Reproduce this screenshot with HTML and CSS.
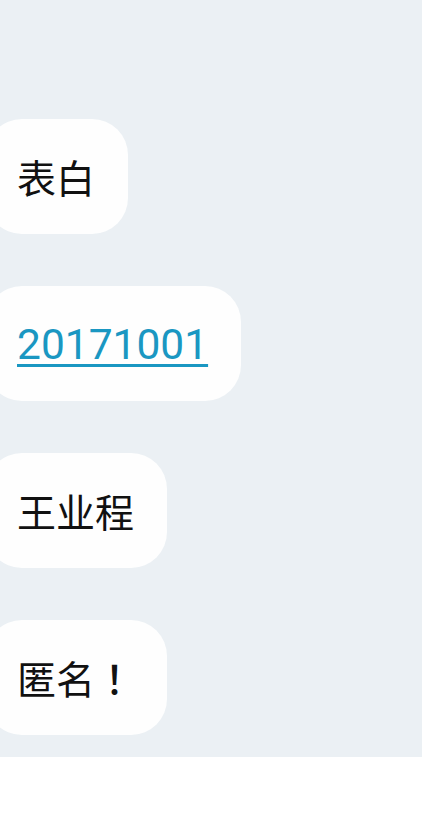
FILE: index.html
```html
<!DOCTYPE html>
<html lang="zh">
<head>
<meta charset="utf-8">
<link rel="stylesheet" href="styles.css">
</head>
<body>
<div class="chat">
  <div class="bubble">表白</div>
  <div class="bubble"><a class="link" href="#">20171001</a></div>
  <div class="bubble">王业程</div>
  <div class="bubble">匿名<span class="punct">！</span></div>
</div>
<div class="footer"></div>
</body>
</html>
```
FILE: styles.css
```css
html, body {
  margin: 0;
  padding: 0;
}
body {
  width: 422px;
  height: 840px;
  overflow: hidden;
  background: #ffffff;
  font-family: "Noto Sans CJK SC", sans-serif;
}
.chat {
  height: 757px;
  box-sizing: border-box;
  background: #ebf0f4;
  padding-top: 119px;
  display: flex;
  flex-direction: column;
  align-items: flex-start;
  gap: 52px;
}
.bubble {
  margin-left: -14px;
  height: 115px;
  box-sizing: border-box;
  padding: 0 33px 0 31px;
  background: #fefefe;
  border-radius: 36px;
  display: flex;
  align-items: center;
  font-size: 39px;
  color: #111111;
  line-height: 1;
}
.punct {
  font-family: "Noto Sans CJK TC", "Noto Sans CJK JP", sans-serif;
  font-weight: 500;
}
.link {
  font-family: Roboto, sans-serif;
  color: #1a97c2;
  font-size: 42.5px;
  padding-top: 4px;
  text-decoration: underline;
  text-decoration-thickness: 3px;
  text-underline-offset: 5px;
}
.footer {
  height: 83px;
  background: #ffffff;
}
```
